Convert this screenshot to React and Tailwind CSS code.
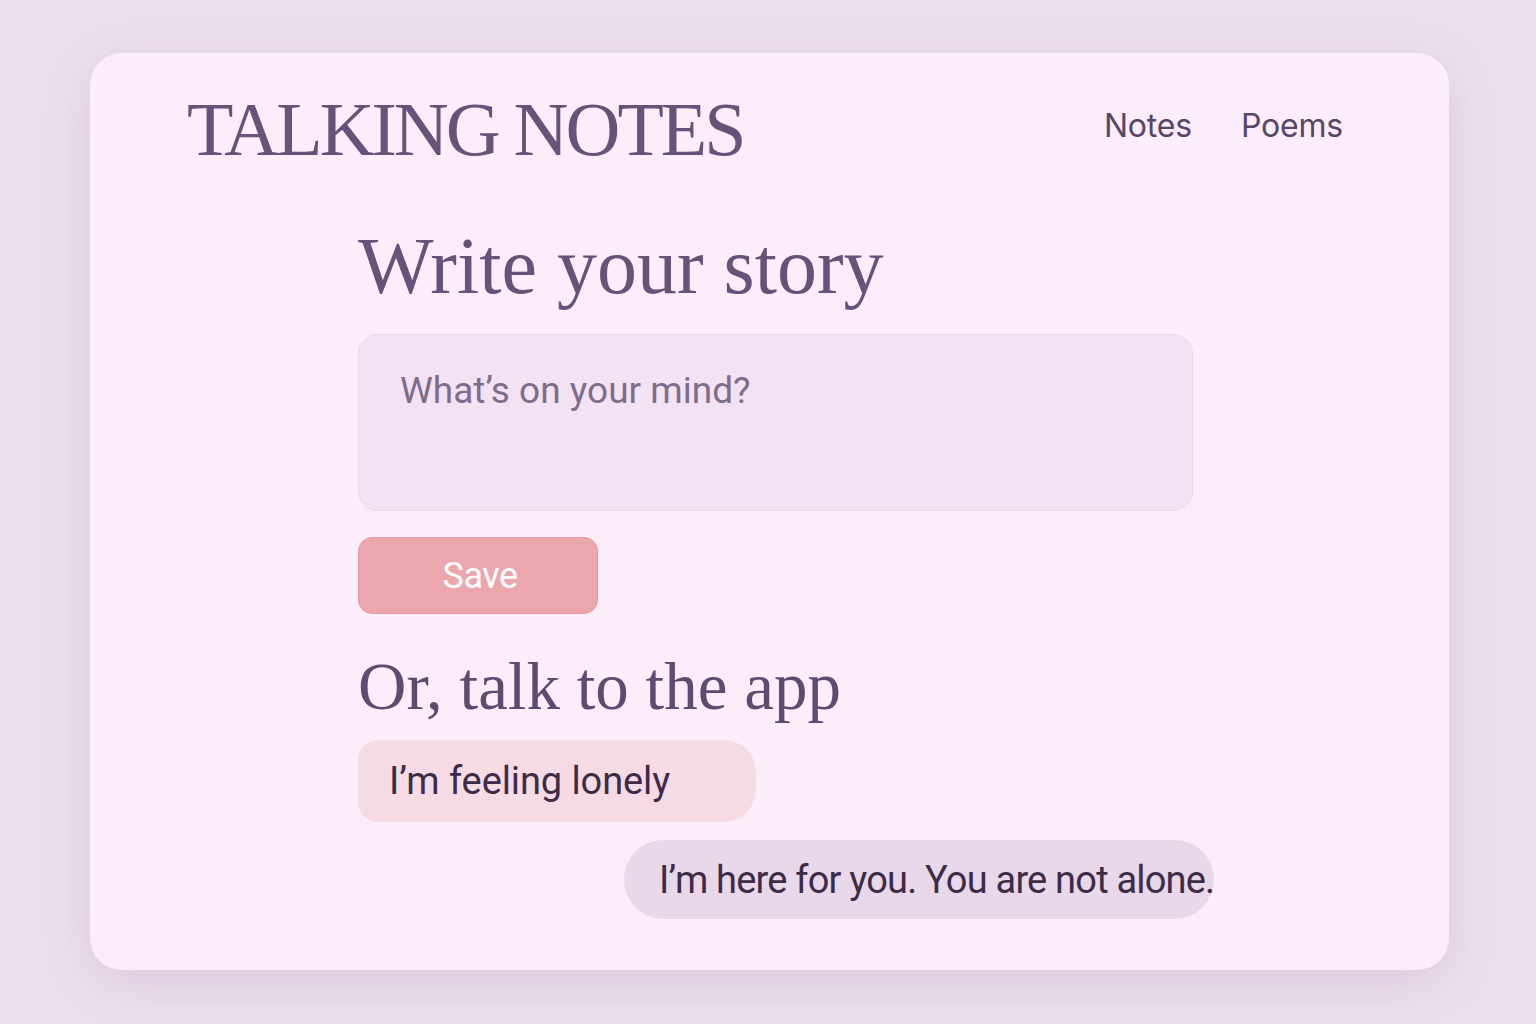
export default function App() {
  return (
    <div className="w-[1536px] h-[1024px] bg-[#ecdfed] pt-[53px] pl-[90px]">
      <div className="w-[1359px] h-[917px] rounded-[32px] bg-[#fbedf9] shadow-[0_12px_48px_rgba(110,70,120,0.13)] pt-[38px] pl-[97px] pr-[106px]">
        <header className="flex justify-between items-start">
          <h1 className="font-['Liberation_Serif',serif] text-[76px] leading-none tracking-[-3px] text-[#67527a]">
            TALKING NOTES
          </h1>
          <nav className="flex gap-[49px] mt-[19px] font-['Inter',sans-serif] text-[32px] leading-none tracking-[-0.2px] text-[#564668]">
            <span>Notes</span>
            <span>Poems</span>
          </nav>
        </header>
        <main className="ml-[171px] w-[856px] flex flex-col">
          <h2 className="mt-[59px] font-['Liberation_Serif',serif] text-[80px] leading-none text-[#67527a]">
            Write your story
          </h2>
          <div className="mt-[28px] w-[835px] h-[177px] rounded-[20px] bg-[#f3e2f3] border border-[#ead9ec] pl-[41px] pt-[34px]">
            <span className="font-['Roboto',sans-serif] text-[37px] leading-[1.2] text-[#7f6c8c]">
              What’s on your mind?
            </span>
          </div>
          <button className="mt-[26px] w-[240px] h-[77px] rounded-[14px] bg-[#eca6ad] border border-[#e79aa3] font-['Roboto',sans-serif] text-white text-[36px] leading-none tracking-[-0.5px] flex items-center justify-center pl-[4px]">
            Save
          </button>
          <h2 className="mt-[39px] font-['Liberation_Serif',serif] text-[67px] leading-none text-[#5f4a72]">
            Or, talk to the app
          </h2>
          <div className="mt-[20px] w-[398px] h-[82px] rounded-l-[20px] rounded-r-[32px] bg-[#f6dbe5] flex items-center pl-[31px] font-['Roboto',sans-serif] text-[38px] leading-none tracking-[-0.1px] text-[#3d2b48]">
            I’m feeling lonely
          </div>
          <div className="mt-[18px] self-end w-[590px] h-[79px] rounded-[40px] bg-[#e8d8ea] flex items-center pl-[35px] font-['Roboto',sans-serif] text-[38px] leading-none tracking-[-0.8px] text-[#3d2b48] whitespace-nowrap">
            I’m here for you. You are not alone.
          </div>
        </main>
      </div>
    </div>
  );
}
